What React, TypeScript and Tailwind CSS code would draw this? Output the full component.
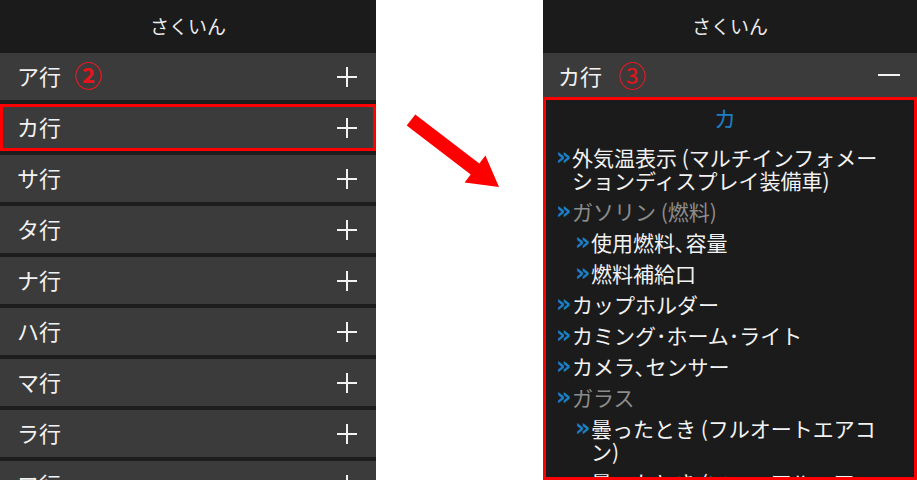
const jp = "font-['Noto_Sans_CJK_JP','Noto_Sans',sans-serif]";

const rows = ["ア行", "カ行", "サ行", "タ行", "ナ行", "ハ行", "マ行", "ラ行", "ワ行"];

type Item = { text: string; sub?: boolean; muted?: boolean };

const items: Item[] = [
  { text: "外気温表示 (マルチインフォメーションディスプレイ装備車)" },
  { text: "ガソリン (燃料)", muted: true },
  { text: "使用燃料､容量", sub: true },
  { text: "燃料補給口", sub: true },
  { text: "カップホルダー" },
  { text: "カミング･ホーム･ライト" },
  { text: "カメラ､センサー" },
  { text: "ガラス", muted: true },
  { text: "曇ったとき (フルオートエアコン)", sub: true },
  { text: "曇ったとき (マニュアルエアコン)", sub: true },
];

function Plus() {
  return (
    <svg width="22" height="22" viewBox="0 0 22 22">
      <path d="M11 1v20M1 11h20" stroke="#f2f2f2" strokeWidth="2" />
    </svg>
  );
}

function Header() {
  return (
    <div className="h-[53px] shrink-0 bg-[#1b1b1b] flex items-center justify-center text-[19px] text-[#ececec]">
      さくいん
    </div>
  );
}

function LeftPanel() {
  return (
    <div className="w-[376px] h-[480px] overflow-hidden bg-[#1d1d1d] flex flex-col shrink-0">
      <Header />
      <div className="flex flex-col gap-[4px]">
        {rows.map((r, i) => (
          <div
            key={r}
            className={`h-[47px] shrink-0 bg-[#3b3b3b] flex items-center justify-between ${
              i === 1 ? "border-[3px] border-[#ff0000] pl-[14px] pr-[15px]" : "pl-[17px] pr-[18px]"
            }`}
          >
            <div className="flex items-center mb-[3px]">
              <span className="text-[22px] text-[#f2f2f2] leading-none">{r}</span>
              {i === 0 && <span className="ml-[13px] text-[28px] leading-none text-[#e4141b] font-bold">②</span>}
            </div>
            <Plus />
          </div>
        ))}
      </div>
    </div>
  );
}

function Arrow() {
  // page coords shifted by the column's left edge (376)
  const pts = [
    [415.3, 114.4],
    [479.3, 163.4],
    [485.4, 155.4],
    [499, 187],
    [464.6, 182.6],
    [470.7, 174.6],
    [406.7, 125.6],
  ]
    .map(([x, y]) => `${x - 376},${y}`)
    .join(" ");
  return (
    <div className="w-[167px] h-[480px] bg-white shrink-0">
      <svg width="167" height="480" viewBox="0 0 167 480">
        <polygon points={pts} fill="#ff0000" />
      </svg>
    </div>
  );
}

function RightPanel() {
  return (
    <div className="w-[374px] h-[480px] overflow-hidden bg-[#1d1d1d] flex flex-col shrink-0">
      <Header />
      <div className="h-[44px] shrink-0 bg-[#3b3b3b] flex items-center justify-between pl-[15px] pr-[17px]">
        <div className="flex items-center mb-[1px]">
          <span className="text-[22px] text-[#f2f2f2] leading-none">カ行</span>
          <span className="ml-[16px] text-[28px] leading-none text-[#e4141b]">③</span>
        </div>
        <div className="w-[22px] h-[2px] bg-[#f2f2f2]" />
      </div>
      <div className="flex-1 min-h-0 overflow-hidden border-[3px] border-[#ff0000] bg-[#1b1b1b] pl-[10px] pr-[20px]">
        <div className="mt-[2px] h-[30px] leading-[30px] text-center text-[22px] text-[#1c7fc4]">カ</div>
        <ul className="mt-[14px] flex flex-col gap-[8px]">
          {items.map((it, i) => (
            <li key={i} className={`flex items-start ${it.sub ? "pl-[19px]" : ""}`}>
              <span className="w-[16px] shrink-0 text-[24px] leading-[22px] font-bold text-[#1c7fc4] font-['DejaVu_Sans',sans-serif]">
                »
              </span>
              <span className={`text-[21px] leading-[23px] ${it.muted ? "text-[#8c8c8c]" : "text-[#f2f2f2]"}`}>
                {it.text}
              </span>
            </li>
          ))}
        </ul>
      </div>
    </div>
  );
}

export default function App() {
  return (
    <div className={`w-[917px] h-[480px] flex bg-white overflow-hidden ${jp}`}>
      <LeftPanel />
      <Arrow />
      <RightPanel />
    </div>
  );
}
